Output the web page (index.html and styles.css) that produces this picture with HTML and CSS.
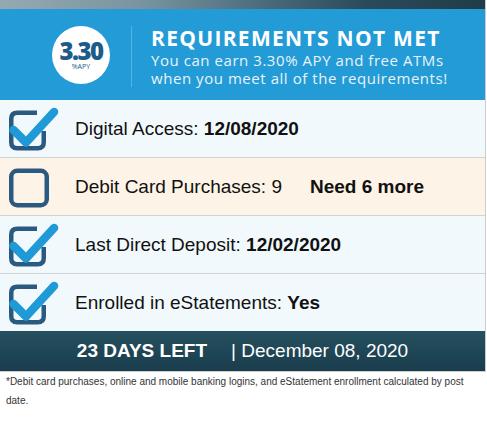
FILE: index.html
```html
<!DOCTYPE html>
<html lang="en">
<head>
    <meta charset="UTF-8">
    <meta name="viewport" content="width=device-width, initial-scale=1.0">
    <title>Requirements</title>
    <link rel="stylesheet" href="styles.css">
</head>
<body>
    <div class="card">
        <div class="top-strip"></div>

        <div class="banner">
            <div class="rate">
                <span class="rate-num">3.30</span>
                <span class="rate-label">%APY</span>
            </div>
            <div class="banner-text">
                <h1>REQUIREMENTS NOT MET</h1>
                <p>You can earn 3.30% APY and free ATMs<br>when you meet all of the requirements!</p>
            </div>
        </div>

        <div class="row">
            <svg class="box" viewBox="0 0 54 50" width="54" height="50">
                <path class="box-line" d="M31 8.75 H11.25 Q5.25 8.75 5.25 14.75 V38.25 Q5.25 44.25 11.25 44.25 H31.75 Q37.75 44.25 37.75 38.25 V27"/>
                <path class="tick" d="M7.5 26 L20 38.5 L48 8"/>
            </svg>
            <span>Digital Access: <b>12/08/2020</b></span>
        </div>

        <div class="row row-warn">
            <svg class="box" viewBox="0 0 54 50" width="54" height="50">
                <rect class="box-line" x="5.25" y="8.75" width="35.5" height="34.5" rx="6"/>
            </svg>
            <span>Debit Card Purchases: 9</span>
            <b class="need">Need 6 more</b>
        </div>

        <div class="row">
            <svg class="box" viewBox="0 0 54 50" width="54" height="50">
                <path class="box-line" d="M31 8.75 H11.25 Q5.25 8.75 5.25 14.75 V38.25 Q5.25 44.25 11.25 44.25 H31.75 Q37.75 44.25 37.75 38.25 V27"/>
                <path class="tick" d="M7.5 26 L20 38.5 L48 8"/>
            </svg>
            <span>Last Direct Deposit: <b>12/02/2020</b></span>
        </div>

        <div class="row row-last">
            <svg class="box" viewBox="0 0 54 50" width="54" height="50">
                <path class="box-line" d="M31 8.75 H11.25 Q5.25 8.75 5.25 14.75 V38.25 Q5.25 44.25 11.25 44.25 H31.75 Q37.75 44.25 37.75 38.25 V27"/>
                <path class="tick" d="M7.5 26 L20 38.5 L48 8"/>
            </svg>
            <span>Enrolled in eStatements: <b>Yes</b></span>
        </div>

        <div class="days">
            <b>23 DAYS LEFT</b>
            <span class="date">| December 08, 2020</span>
        </div>
    </div>

    <p class="note">*Debit card purchases, online and mobile banking logins, and eStatement enrollment calculated by post date.</p>
</body>
</html>
```

FILE: styles.css
```css
body {
    margin: 0;
    font-family: "Liberation Sans", Arial, sans-serif;
    color: #111;
    background: #fff;
}

.card {
    width: 485px;
    border-right: 1px solid #ccc;
    border-bottom: 1px solid #ccc;
}

.top-strip {
    height: 9px;
    background: linear-gradient(90deg, #95a9b2 0%, #7893a0 30%, #4a6a7a 55%, #2c4b5a 75%, #1f3c4a 100%);
}

.banner {
    height: 91px;
    background-color: #239bd6;
    display: flex;
    align-items: center;
}

.rate {
    width: 58px;
    height: 58px;
    margin-left: 52px;
    border-radius: 50%;
    background: #fff;
    display: flex;
    flex-direction: column;
    align-items: center;
    justify-content: center;
    color: #1d5b89;
}

.rate-num {
    font-family: "Open Sans", sans-serif;
    font-weight: 800;
    font-size: 24px;
    line-height: 24px;
    letter-spacing: -1.5px;
    margin-top: 1px;
}

.rate-label {
    font-family: "Open Sans", sans-serif;
    font-size: 7px;
    line-height: 8px;
}

.banner-text {
    margin-left: 21px;
    padding-left: 19px;
    border-left: 1px solid #56b3e2;
    color: #fff;
    margin-top: 3px;
}

.banner-text h1 {
    margin: 0;
    font-family: "Open Sans", sans-serif;
    font-size: 21px;
    font-weight: 700;
    line-height: 25px;
    letter-spacing: 1.3px;
}

.banner-text p {
    margin: 0;
    font-family: "Open Sans", sans-serif;
    font-size: 15px;
    line-height: 18px;
    letter-spacing: 0.55px;
    color: #e8f4fb;
}

.row {
    height: 57px;
    border-bottom: 1px solid #cfd3d6;
    background-color: #f2f9fd;
    display: flex;
    align-items: center;
    font-size: 19px;
}

.row-last {
    border-bottom: none;
}

.row-warn {
    background-color: #fef3e7;
}

.box {
    margin-left: 6px;
    margin-right: 15px;
    flex: none;
}

.box-line {
    fill: none;
    stroke: #2b5a80;
    stroke-width: 4.5;
}

.tick {
    fill: none;
    stroke: #1f9ad7;
    stroke-width: 8.5;
    stroke-linecap: round;
    stroke-linejoin: round;
}

.row b {
    font-weight: 700;
}

.need {
    margin-left: 28px;
}

.days {
    height: 40px;
    background: linear-gradient(180deg, #26505f 0%, #1f4656 50%, #1a3d4c 100%);
    color: #fff;
    font-size: 19px;
    display: flex;
    align-items: center;
    justify-content: center;
}

.days .date {
    margin-left: 24px;
}

.note {
    margin: 0;
    padding: 0 8px 0 6px;
    width: 475px;
    font-size: 10px;
    line-height: 19px;
    color: #333;
}
```
